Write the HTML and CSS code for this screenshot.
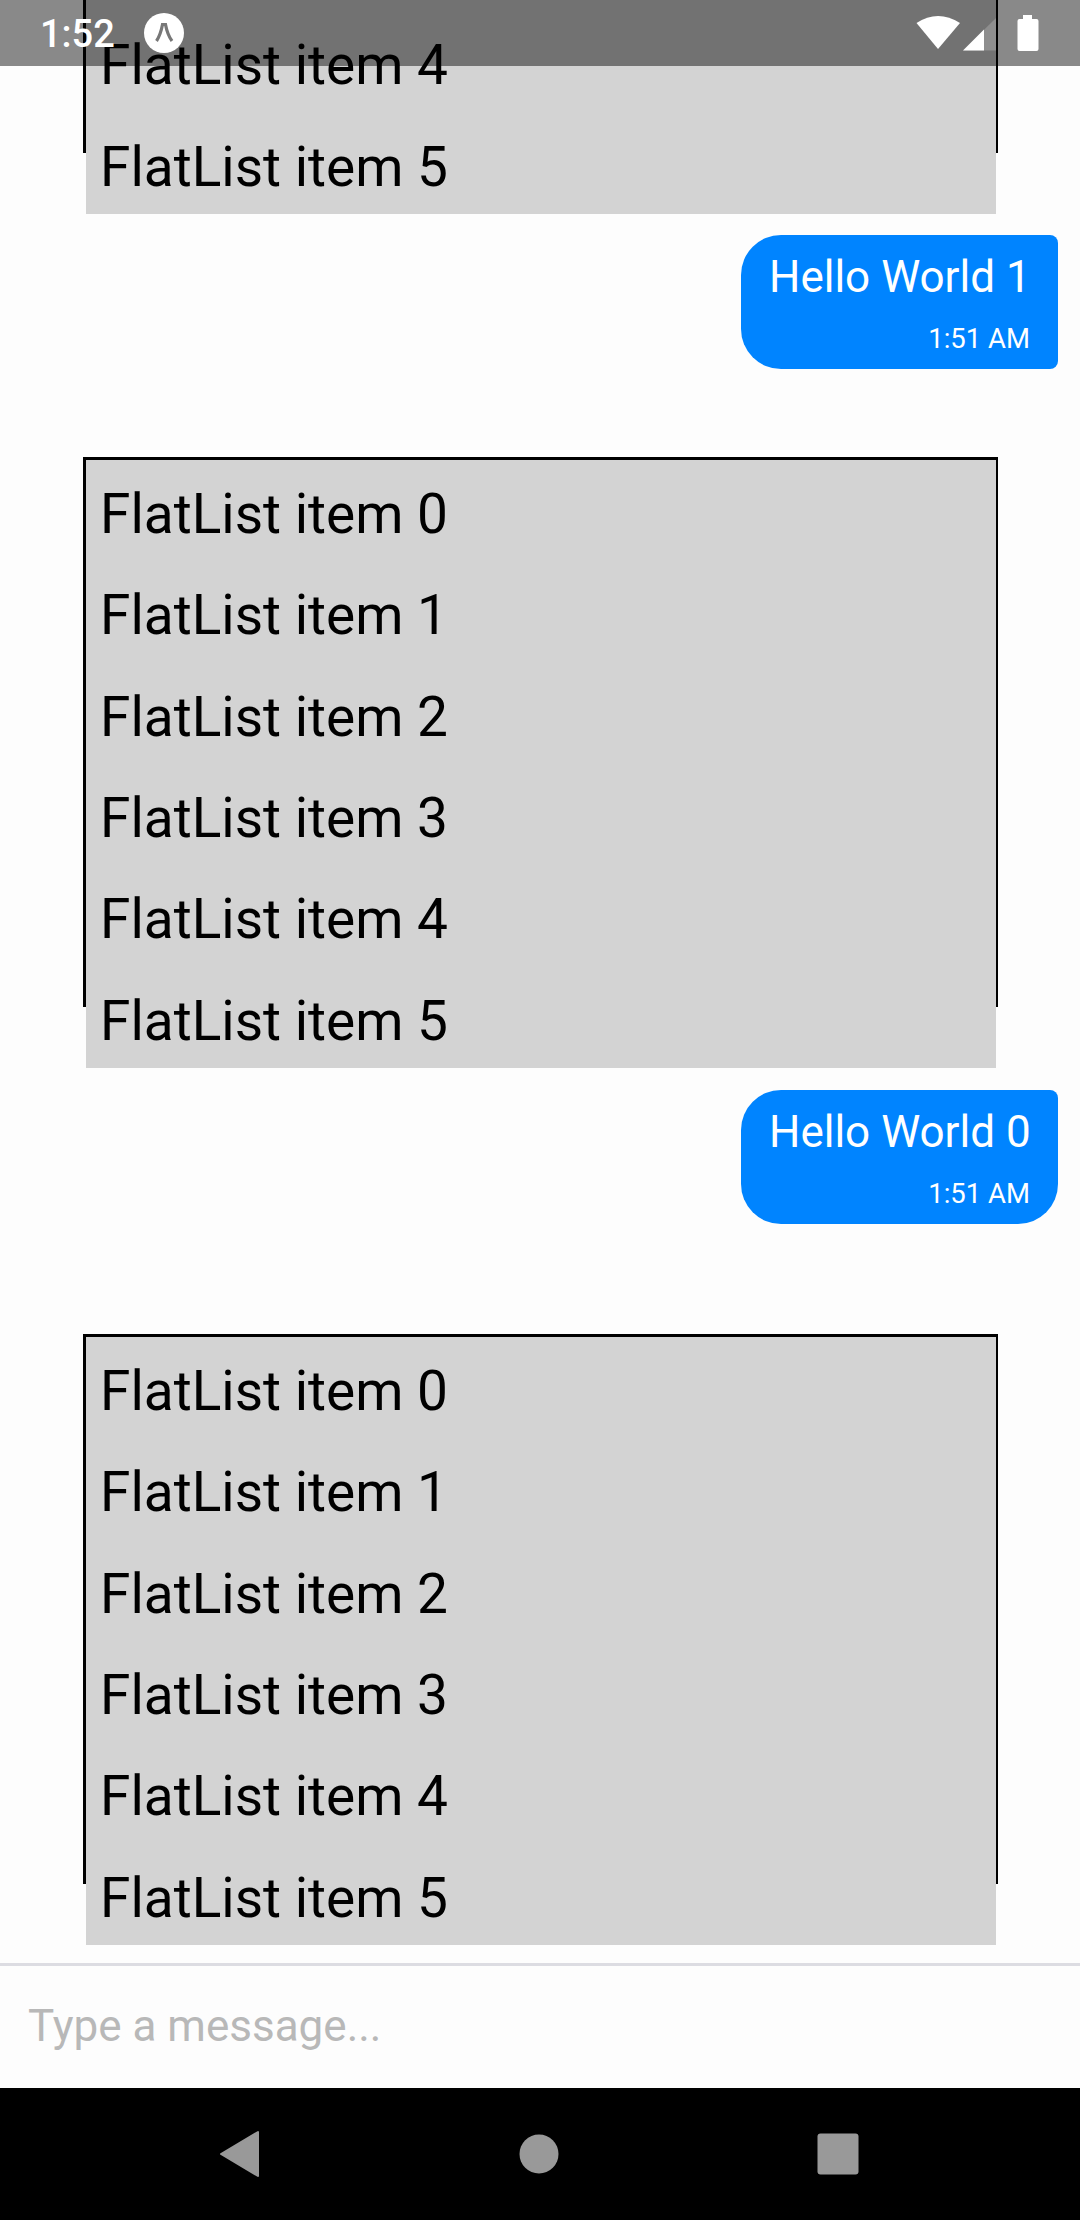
FILE: index.html
```html
<!DOCTYPE html>
<html lang="en">
<head>
<meta charset="utf-8">
<title>Chat</title>
<link rel="stylesheet" href="styles.css">
</head>
<body>
<div class="screen">
  <header class="status">
    <span class="clock">1:52</span>
    <svg class="expo" width="40" height="40" viewBox="0 0 40 40"><circle cx="20" cy="20" r="20" fill="#fff"/><path d="M12.500 28Q16.500 22 18.500 11.500H21.500Q23.500 22 28 28" fill="none" stroke="#777" stroke-width="3.200"/></svg>
    <svg class="signals" width="124" height="38" viewBox="0 0 124 38"><path d="M0.500 9Q22-5 44 9L22 35Z" fill="#fff"/><path d="M80 4V36.500H47Z" fill="#fff" opacity=".2"/><path d="M68 15.500V36.500H47Z" fill="#fff"/><path d="M107 1h9v4h4.500q2 0 2 2v28q0 2-2 2h-17q-2 0-2-2V7q0-2 2-2h3.500z" fill="#fff"/></svg>
  </header>
  <main class="chat">
    <ul class="list list-cut">
      <li>FlatList item 4</li>
      <li>FlatList item 5</li>
    </ul>
    <div class="bubble bubble-joined">
      <p class="text">Hello World 1</p>
      <p class="time">1:51 AM</p>
    </div>
    <ul class="list">
      <li>FlatList item 0</li>
      <li>FlatList item 1</li>
      <li>FlatList item 2</li>
      <li>FlatList item 3</li>
      <li>FlatList item 4</li>
      <li>FlatList item 5</li>
    </ul>
    <div class="bubble bubble-last">
      <p class="text">Hello World 0</p>
      <p class="time">1:51 AM</p>
    </div>
    <ul class="list">
      <li>FlatList item 0</li>
      <li>FlatList item 1</li>
      <li>FlatList item 2</li>
      <li>FlatList item 3</li>
      <li>FlatList item 4</li>
      <li>FlatList item 5</li>
    </ul>
  </main>
  <div class="composer">Type a message...</div>
  <nav class="nav">
    <svg width="48" height="48" viewBox="0 0 48 48"><path d="M42 2V46L5 24Z" fill="#999" stroke="#999" stroke-width="2" stroke-linejoin="round"/></svg>
    <svg width="48" height="48" viewBox="0 0 48 48"><circle cx="24" cy="24" r="19.500" fill="#999"/></svg>
    <svg width="48" height="48" viewBox="0 0 48 48"><rect x="3.500" y="3.500" width="41" height="41" rx="3" fill="#999"/></svg>
  </nav>
</div>
</body>
</html>
```
FILE: styles.css
```css
* { box-sizing: border-box; }

body, ul, p { margin: 0; padding: 0; }

body {
  font-family: Roboto, sans-serif;
  background: #fdfdfd;
}

.screen {
  position: relative;
  display: flex;
  flex-direction: column;
  width: 1080px;
  height: 2220px;
  overflow: hidden;
}

/* Translucent bar laid over the scrolled chat */
.status {
  position: absolute;
  z-index: 2;
  top: 0;
  left: 0;
  display: flex;
  align-items: center;
  width: 100%;
  height: 66px;
  padding: 0 40px;
  background: rgba(0, 0, 0, .46);
  color: #fff;
}

.clock {
  width: 104px;
  font-size: 38px;
  font-weight: 500;
  line-height: 66px;
  padding-top: 2px;
}

.signals { margin-left: auto; }

.chat {
  flex: 1;
  display: flex;
  flex-direction: column;
}

.list {
  width: 915px;
  height: 550px;
  margin-left: 83px;
  border: solid #000;
  border-width: 3px 2px 0 3px;
  list-style: none;
}

.list-cut {
  height: 153px;
  padding-top: 11.33px;
  border-top: 0;
  background: #d3d3d3;
}

.list li {
  height: 101.33px;
  padding: 4px 0 0 14px;
  overflow: hidden;
  background: #d3d3d3;
  color: #000;
  font-size: 55px;
  line-height: 101.33px;
  white-space: nowrap;
}

.bubble {
  width: 317px;
  height: 134px;
  margin-left: 741px;
  padding: 10px 28px 0;
  border-radius: 40px 8px 8px 40px;
  background: #0084ff;
  color: #fff;
}

.bubble-joined { margin-top: 82px; margin-bottom: 88px; }

.bubble-last {
  margin-top: 83px;
  margin-bottom: 110px;
  border-bottom-right-radius: 40px;
}

.text {
  font-size: 44px;
  line-height: 64px;
  white-space: nowrap;
}

.time {
  font-size: 27.5px;
  line-height: 36px;
  margin-top: 12px;
  text-align: right;
}

.composer {
  height: 125px;
  padding: 1px 0 0 28px;
  border-top: 3px solid #dcdce2;
  color: #b8b8b8;
  font-size: 44px;
  line-height: 119px;
}

.nav {
  display: flex;
  align-items: center;
  justify-content: space-between;
  height: 132px;
  padding: 0 218px 0 216px;
  background: #000;
}
```
